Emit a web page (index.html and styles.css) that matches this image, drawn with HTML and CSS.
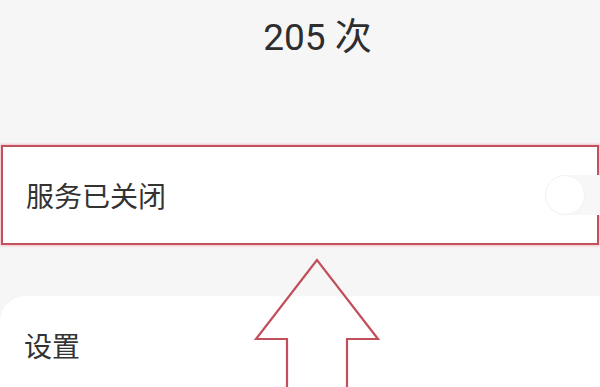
FILE: index.html
```html
<!DOCTYPE html>
<html lang="zh-CN">
<head>
    <meta charset="UTF-8">
    <title>服务</title>
    <link rel="stylesheet" href="styles.css">
</head>
<body>
<div id="page">
    <div class="count">205 次</div>
    <div class="service">
        <span class="label">服务已关闭</span>
        <span class="switch"><span class="knob"></span></span>
    </div>
    <div class="card">
        <span class="label">设置</span>
        <span class="more">›</span>
    </div>
    <!-- red arrow drawn over the page -->
    <svg class="arrow" width="600" height="387" viewBox="0 0 600 387">
        <polygon points="317,260 256,339 287,339 287,392 347,392 347,339 378,339"
                 fill="none" stroke="#c2505c" stroke-width="2.2" stroke-linejoin="miter"/>
    </svg>
</div>
</body>
</html>
```

FILE: styles.css
```css
body
{
    margin: 0px;
    background: #f6f6f6;
    font-family: Roboto, "Noto Sans CJK SC", sans-serif;
    color: #333;
}
#page{
    position: relative;
    width: 600px;
    height: 387px;
    overflow: hidden;
    display: flex;
    flex-direction: column;
}
#page > div{
    flex-shrink: 0;
}
.count{
    padding-top: 12px;
    padding-left: 35px;
    height: 52px;
    line-height: 52px;
    text-align: center;
    font-size: 37px;
    color: #2e2e2e;
}
.service{
    margin-top: 81px;
    width: 594px;
    height: 96px;
    margin-left: 1px;
    border: 2px solid #c4525e;
    box-shadow: 0 0 2px 1px #f3c2c8;
    background: #fff;
    display: flex;
    align-items: center;
    justify-content: space-between;
}
.label{
    padding-left: 24px;
    font-size: 28px;
    color: #333;
}
.service .label{
    padding-left: 23px;
}
.switch{
    width: 60px;
    height: 40px;
    border-radius: 20px 0 0 20px;
    background: #f7f7f7;
    position: relative;
    margin-right: -8px;
}
.knob{
    position: absolute;
    left: 0;
    top: 0;
    width: 38px;
    height: 38px;
    border-radius: 50%;
    background: #fff;
    border: 1px solid #f3f3f3;
}
.card{
    margin-top: 51px;
    height: 120px;
    background: #fff;
    border-radius: 26px 0 0 0;
    display: flex;
    align-items: flex-start;
    justify-content: space-between;
    padding-top: 29px;
}
.card .label{
    padding-left: 24px;
}
.more{
    font-size: 30px;
    color: #c8c8c8;
    margin-right: -10px;
    line-height: 36px;
}
.arrow{
    position: absolute;
    left: 0;
    top: 0;
}
```
